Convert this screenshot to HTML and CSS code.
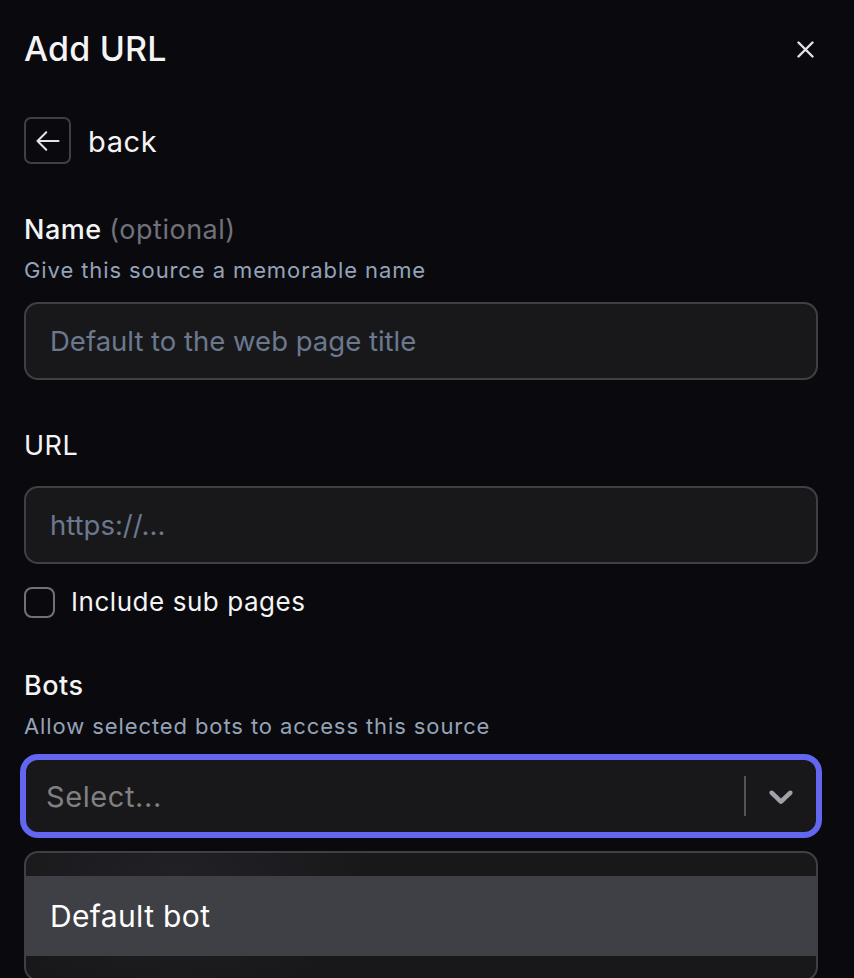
FILE: index.html
```html
<!DOCTYPE html>
<html lang="en">
<head>
<meta charset="utf-8">
<title>Add URL</title>
<link rel="stylesheet" href="styles.css">
</head>
<body>
<div class="panel">
  <header class="header">
    <h1 class="title">Add URL</h1>
    <button class="close" aria-label="Close">
      <svg width="17" height="17" viewBox="0 0 17 17" fill="none" stroke="#e4e4e7" stroke-width="2.4" stroke-linecap="round"><path d="M1.5 1.5L15.5 15.5M15.5 1.5L1.5 15.5"/></svg>
    </button>
  </header>

  <div class="back-row">
    <button class="back-btn" aria-label="Back">
      <svg width="28" height="28" viewBox="0 0 24 24" fill="none" stroke="#e4e4e7" stroke-width="1.8" stroke-linecap="round" stroke-linejoin="round"><path d="M10.5 19.5L3 12m0 0l7.5-7.5M3 12h18"/></svg>
    </button>
    <span class="back-text">back</span>
  </div>

  <div class="field field-name">
    <label class="label">Name <span class="optional">(optional)</span></label>
    <p class="help">Give this source a memorable name</p>
    <input class="input input-help" type="text" placeholder="Default to the web page title">
  </div>

  <div class="field field-url">
    <label class="label label-light">URL</label>
    <input class="input input-nohelp" type="text" placeholder="https://...">
    <div class="check-row">
      <span class="checkbox"></span>
      <span class="check-text">Include sub pages</span>
    </div>
  </div>

  <div class="field field-bots">
    <label class="label">Bots</label>
    <p class="help">Allow selected bots to access this source</p>
    <div class="select">
      <div class="select-value"><span class="select-placeholder">Select...</span></div>
      <span class="select-sep"></span>
      <span class="select-indicator">
        <svg width="40" height="40" viewBox="0 0 20 20" fill="#a1a1aa"><path d="M4.516 7.548c0.436-0.446 1.043-0.481 1.576 0l3.908 3.747 3.908-3.747c0.533-0.481 1.141-0.446 1.574 0 0.436 0.445 0.408 1.197 0 1.615-0.406 0.418-4.695 4.502-4.695 4.502-0.217 0.223-0.502 0.335-0.787 0.335s-0.57-0.112-0.789-0.335c0 0-4.287-4.084-4.695-4.502s-0.436-1.170 0-1.615z"/></svg>
      </span>
    </div>
    <div class="menu">
      <div class="option option-active">Default bot</div>
    </div>
  </div>
</div>
</body>
</html>
```

FILE: styles.css
```css
* {
  box-sizing: border-box;
  margin: 0;
  padding: 0;
}

html, body {
  background: #0a0a0e;
}

body {
  font-family: Inter, "Noto Sans", sans-serif;
  color: #e4e4e7;
  height: 978px;
  overflow: hidden;
}

.panel {
  padding: 24px 36px 0 24px;
}

.header {
  display: flex;
  align-items: center;
  justify-content: space-between;
  height: 50px;
}

.title {
  font-size: 34px;
  font-weight: 500;
  line-height: 50px;
  color: #f4f4f5;
  letter-spacing: 0.2px;
}

.close {
  display: flex;
  background: none;
  border: 0;
  width: 17px;
  height: 17px;
  margin-right: 4px;
}

.back-row {
  display: flex;
  align-items: center;
  gap: 17px;
  margin-top: 43px;
}

.back-btn {
  width: 47px;
  height: 47px;
  border: 2px solid #3f3f46;
  border-radius: 7px;
  background: transparent;
  display: flex;
  align-items: center;
  justify-content: center;
}

.back-text {
  font-size: 29px;
  line-height: 32px;
  color: #f4f4f5;
  letter-spacing: 0.6px;
  padding-top: 3px;
}

.field-name {
  margin-top: 50px;
}

.field-url {
  margin-top: 50px;
}

.field-bots {
  margin-top: 52px;
}

.label {
  display: block;
  font-size: 27px;
  line-height: 32px;
  font-weight: 500;
  color: #f4f4f5;
  letter-spacing: 0.5px;
}

.label-light {
  font-weight: 400;
}

.optional {
  color: #71717a;
  font-weight: 400;
}

.help {
  margin-top: 9px;
  font-size: 22px;
  line-height: 30px;
  color: #94a3b8;
  letter-spacing: 0.9px;
}

.input {
  display: block;
  width: 100%;
  height: 78px;
  border: 2px solid #3f3f46;
  border-radius: 14px;
  background: #18181b;
  padding: 0 24px;
  font-family: inherit;
  font-size: 27.5px;
  color: #f4f4f5;
  outline: none;
}

.input::placeholder {
  color: #6b788d;
}

.input-help {
  margin-top: 17px;
}

.input-nohelp {
  margin-top: 24px;
}

.check-row {
  display: flex;
  align-items: center;
  gap: 16px;
  margin-top: 22px;
}

.checkbox {
  width: 31px;
  height: 31px;
  border: 2px solid #71717a;
  border-radius: 8px;
}

.check-text {
  font-size: 26px;
  line-height: 32px;
  color: #f4f4f5;
  letter-spacing: 0.55px;
}

.select {
  display: flex;
  align-items: center;
  margin-top: 17px;
  height: 76px;
  border: 2px solid #6366f1;
  border-radius: 14px;
  box-shadow: 0 0 0 4px #6366f1;
  background: #18181b;
}

.select-value {
  flex: 1;
  padding: 0 16px;
}

.select-placeholder {
  margin-left: 4px;
  font-size: 29px;
  color: #808080;
  letter-spacing: 0.6px;
}

.select-sep {
  align-self: stretch;
  width: 2px;
  margin: 16px 0;
  background: #52525b;
}

.select-indicator {
  display: flex;
  padding: 0 15px 0 15px;
}

.menu {
  margin-top: 17px;
  border: 2px solid #3f3f46;
  border-radius: 14px;
  padding: 23px 0;
  background: radial-gradient(ellipse 200px 120px at 150px 30px, #222226 0%, #18181b 100%);
  overflow: hidden;
}

.option {
  height: 80px;
  line-height: 80px;
  padding: 0 24px;
  font-size: 30px;
  color: #ffffff;
  letter-spacing: 0.35px;
}

.option-active {
  background: #3f3f46;
}
```
